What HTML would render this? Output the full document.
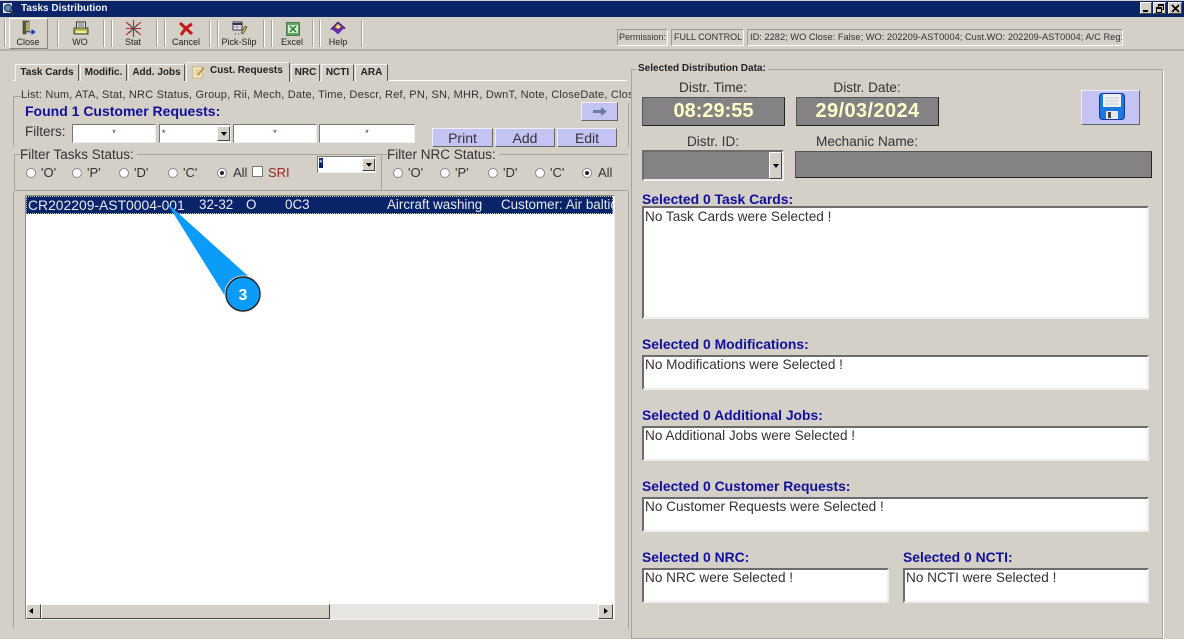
<!DOCTYPE html>
<html><head><meta charset="utf-8"><style>
html,body{margin:0;padding:0}
body{width:1184px;height:629px;position:relative;overflow:hidden;background:#d4d0c8;font-family:"Liberation Sans",sans-serif;color:#333}
div,span.a,svg.a{position:absolute;box-sizing:border-box}
.t{white-space:nowrap;line-height:14px}
.sep{top:20px;width:2px;height:27px;border-left:1px solid #a5a29c;border-right:1px solid #fff}
.tb{top:36px;font-size:9px;width:50px;text-align:center;color:#222;line-height:12px}
.tab{top:64px;height:17px;background:#d4d0c8;border:1px solid #f4f3f0;border-right:1px solid #555;border-bottom:0;font-size:10px;font-weight:bold;color:#222;text-align:center;line-height:15px;white-space:nowrap}
.inp{background:#fff;border:1px solid;border-color:#777 #eee #eee #777;color:#2a1a80;font-size:9px;text-align:center;line-height:16px}
.btn{background:#c4c4f4;border:1px solid;border-color:#eeeefc #666 #666 #eeeefc;font-size:14px;text-align:center;color:#333;line-height:18px}
.grp{border:1px solid #a8a59f;box-shadow:1px 1px 0 #fff}
.rd{width:10px;height:10px;border-radius:50%;background:#fff;border:1px solid #888;top:168px}
.rd.on::after{content:"";position:absolute;left:2px;top:2px;width:4px;height:4px;border-radius:50%;background:#222}
.lb{top:166px;font-size:13px;color:#333;white-space:nowrap;line-height:14px}
.h{font-size:13.9px;font-weight:bold;color:#10109c;white-space:nowrap;line-height:15px}
.box{background:#fff;border:2px solid;border-color:#6c6c6c #eeeeee #eeeeee #6c6c6c;font-size:13.6px;color:#333;padding-left:1px;line-height:15px;white-space:nowrap}
.gray{background:#848284;border:1px solid;border-color:#555 #222 #222 #555;color:#ffffc8;font-size:20px;font-weight:bold;text-align:center;line-height:26px}
.cap{font-size:13.6px;color:#333;text-align:center;white-space:nowrap;line-height:15px}
</style></head><body>

<!-- title bar -->
<div style="left:0;top:0;width:1184px;height:1px;background:#d4d0c8"></div>
<div style="left:0;top:1px;width:1184px;height:16px;background:#0a246a"></div>
<svg class="a" style="left:2px;top:2px" width="14" height="14" viewBox="0 0 14 14"><rect x="1" y="1" width="9" height="10" fill="#d8e4ee"/><circle cx="6" cy="6" r="3.5" fill="#5a8fc0" stroke="#222"/><path d="M8 9l4 4" stroke="#333" stroke-width="2"/></svg>
<div class="t" style="left:21px;top:2px;font-size:10px;font-weight:bold;color:#f2f2f2">Tasks Distribution</div>
<div style="left:1140px;top:2px;width:12px;height:12px;background:#d4d0c8;border:1px solid;border-color:#fff #444 #444 #fff"><div style="left:2px;top:7px;width:5px;height:2px;background:#000"></div></div>
<div style="left:1153px;top:2px;width:13px;height:12px;background:#d4d0c8;border:1px solid;border-color:#fff #444 #444 #fff"><div style="left:4px;top:1px;width:6px;height:6px;border:1px solid #000;border-top-width:2px"></div><div style="left:2px;top:4px;width:6px;height:6px;border:1px solid #000;border-top-width:2px;background:#d4d0c8"></div></div>
<div style="left:1168px;top:2px;width:14px;height:12px;background:#d4d0c8;border:1px solid;border-color:#fff #444 #444 #fff"><svg class="a" style="left:2px;top:1px" width="9" height="9"><path d="M1 1l7 7M8 1l-7 7" stroke="#000" stroke-width="1.7"/></svg></div>

<!-- toolbar -->
<div style="left:0;top:49px;width:1184px;height:2px;background:#b4b1aa"></div>
<div style="left:9px;top:18px;width:39px;height:31px;border:1px solid;border-color:#fff #8a8780 #8a8780 #fff"></div>
<div class="sep" style="left:4px"></div>
<div class="sep" style="left:57px"></div>
<div class="sep" style="left:103px"></div>
<div class="sep" style="left:111px"></div>
<div class="sep" style="left:156px"></div>
<div class="sep" style="left:164px"></div>
<div class="sep" style="left:209px"></div>
<div class="sep" style="left:217px"></div>
<div class="sep" style="left:263px"></div>
<div class="sep" style="left:271px"></div>
<div class="sep" style="left:312px"></div>
<div class="sep" style="left:319px"></div>
<div class="sep" style="left:361px"></div>

<svg class="a" style="left:20px;top:20px" width="16" height="16" viewBox="0 0 16 16"><path d="M3 1h6v11H6v2H3z" fill="#5c5c3c" stroke="#333" stroke-width=".6"/><rect x="6" y="2" width="3" height="9" fill="#a8a878"/><path d="M9 12l3 0M12 10v4l3-2z" stroke="#1a3aa8" fill="#1a3aa8" stroke-width="1"/></svg>
<svg class="a" style="left:73px;top:21px" width="16" height="15" viewBox="0 0 16 15"><rect x="3.5" y="1" width="9" height="6" fill="#eee" stroke="#333"/><path d="M5 3h6M5 5h6" stroke="#333" stroke-width=".8"/><rect x="1" y="7" width="14" height="6" fill="#b8b84c" stroke="#444"/><rect x="3" y="10" width="10" height="2" fill="#f4f0a0"/></svg>
<svg class="a" style="left:125px;top:20px" width="17" height="17" viewBox="0 0 17 17"><path d="M1 2l15 13M16 2L1 15M8.5 0v17M1 8.500h15" stroke="#b02828" stroke-width="1.100"/><path d="M4 4l9 9M13 4l-9 9" stroke="#555" stroke-width="1"/></svg>
<svg class="a" style="left:178px;top:22px" width="16" height="14" viewBox="0 0 16 14"><path d="M2 1l12 11M14 2c-4 2-8 6-11 11" stroke="#c81818" stroke-width="3" fill="none"/></svg>
<svg class="a" style="left:232px;top:21px" width="16" height="16" viewBox="0 0 16 16"><rect x="1" y="1" width="9" height="8" fill="#e8e8f8" stroke="#334"/><path d="M1 3h9" stroke="#334" stroke-width="2"/><path d="M5 4v5M1 6h9" stroke="#889" stroke-width=".7"/><path d="M9 12l4-7 2 1-4 7z" fill="#c8b830" stroke="#333" stroke-width=".6"/><path d="M3 13h1M6 13h1" stroke="#333"/></svg>
<svg class="a" style="left:286px;top:22px" width="14" height="14" viewBox="0 0 14 14"><rect x=".5" y=".5" width="13" height="13" fill="#5fa860" stroke="#4a7a4a"/><rect x="2" y="3" width="10" height="8" fill="#d4ecd4"/><path d="M4 4l6 6M10 4l-6 6" stroke="#2a7a34" stroke-width="1.500"/></svg>
<svg class="a" style="left:330px;top:21px" width="16" height="15" viewBox="0 0 16 15"><path d="M8 1l7 6-7 7-7-6z" fill="#6a2ca0" stroke="#301050" stroke-width=".7"/><path d="M5 6l3-3 3 3-3 2z" fill="#f0e060"/><path d="M2 9l6 5 6-6" stroke="#d8d0f0" fill="none"/></svg>

<div class="tb" style="left:3px">Close</div>
<div class="tb" style="left:55px">WO</div>
<div class="tb" style="left:108px">Stat</div>
<div class="tb" style="left:161px">Cancel</div>
<div class="tb" style="left:214px">Pick-Slip</div>
<div class="tb" style="left:267px">Excel</div>
<div class="tb" style="left:313px">Help</div>

<div class="t" style="left:617px;top:29px;width:51px;height:17px;border:1px solid;border-color:#999 #fff #fff #999;font-size:9px;line-height:15px;padding-left:1px;color:#333">Permission:</div>
<div class="t" style="left:671px;top:29px;width:73px;height:17px;border:1px solid;border-color:#999 #fff #fff #999;font-size:9px;line-height:15px;padding-left:2px;color:#333">FULL CONTROL</div>
<div class="t" style="left:747px;top:29px;width:376px;height:17px;border:1px solid;border-color:#999 #fff #fff #999;font-size:9.3px;line-height:15px;padding-left:2px;color:#333;overflow:hidden">ID: 2282; WO Close: False; WO: 202209-AST0004; Cust.WO: 202209-AST0004; A/C Reg:</div>

<!-- tabs -->
<div style="left:13px;top:80px;width:614px;height:1px;background:#fff"></div>
<div style="left:13px;top:191px;width:1px;height:438px;background:#a8a59f"></div>
<div style="left:628px;top:191px;width:1px;height:438px;background:#a8a59f"></div>
<div class="tab" style="left:15px;width:64px">Task Cards</div>
<div class="tab" style="left:80px;width:47px">Modific.</div>
<div class="tab" style="left:128px;width:57px">Add. Jobs</div>
<div class="tab" style="left:186px;width:104px;top:62px;height:20px;text-align:left;padding-left:23px;line-height:16px;z-index:2">Cust. Requests
<svg class="a" style="left:5px;top:2px" width="13" height="14" viewBox="0 0 13 14"><rect x="1" y="2" width="9" height="11" fill="#f6efc8" stroke="#c8b880"/><path d="M3 5h5M3 7h4M3 9h3" stroke="#b0a070" stroke-width=".8"/><path d="M5 10l6-8 1.500 1-6 8z" fill="#c89030"/></svg></div>
<div class="tab" style="left:291px;width:29px">NRC</div>
<div class="tab" style="left:321px;width:33px">NCTI</div>
<div class="tab" style="left:355px;width:33px">ARA</div>

<!-- list group -->
<div style="left:13px;top:96px;width:1px;height:51px;background:#a8a59f"></div>
<div style="left:13px;top:96px;width:8px;height:1px;background:#a8a59f"></div>
<div style="left:628px;top:103px;width:1px;height:44px;background:#a8a59f"></div>
<div class="t" style="left:21px;top:88px;width:610px;overflow:hidden;font-size:11px;letter-spacing:.2px;color:#333">List: Num, ATA, Stat, NRC Status, Group, Rii, Mech, Date, Time, Descr, Ref, PN, SN, MHR, DwnT, Note, CloseDate, CloseTime</div>
<div class="t" style="left:25px;top:103px;font-size:14px;font-weight:bold;color:#10109c;line-height:16px">Found 1 Customer Requests:</div>
<div class="t" style="left:25px;top:125px;font-size:13.5px">Filters:</div>
<div class="inp" style="left:72px;top:124px;width:84px;height:19px">*</div>
<div class="inp" style="left:159px;top:124px;width:72px;height:19px;text-align:left;padding-left:2px">*
<div style="left:57px;top:1px;width:13px;height:15px;background:#d4d0c8;border:1px solid;border-color:#fff #444 #444 #fff"><div style="left:3px;top:5px;width:0;height:0;border:3px solid transparent;border-top:4px solid #000"></div></div></div>
<div class="inp" style="left:233px;top:124px;width:84px;height:19px">*</div>
<div class="inp" style="left:319px;top:124px;width:96px;height:19px">*</div>
<div class="btn" style="left:581px;top:102px;width:37px;height:19px"><svg class="a" style="left:11px;top:4px" width="15" height="9"><path d="M0 3h8V0l6 4.500-6 4.500V6H0z" fill="#6c7c9c"/></svg></div>
<div class="btn" style="left:432px;top:128px;width:61px;height:19px">Print</div>
<div class="btn" style="left:495px;top:128px;width:60px;height:19px">Add</div>
<div class="btn" style="left:557px;top:128px;width:60px;height:19px">Edit</div>

<!-- filter status -->
<div class="grp" style="left:14px;top:154px;width:367px;height:37px;border-right:0;box-shadow:none"></div>
<div style="left:381px;top:154px;width:247px;height:37px;border-top:1px solid #a8a59f;border-left:1px solid #a8a59f;border-bottom:1px solid #a8a59f"></div>
<div class="t" style="left:20px;top:148px;font-size:13.5px;background:#d4d0c8;padding-right:3px">Filter Tasks Status:</div>
<div class="t" style="left:387px;top:148px;font-size:13.5px;background:#d4d0c8;padding-right:3px">Filter NRC Status:</div>

<div class="rd" style="left:26px"></div><div class="lb" style="left:41px">'O'</div>
<div class="rd" style="left:72px"></div><div class="lb" style="left:87px">'P'</div>
<div class="rd" style="left:119px"></div><div class="lb" style="left:134px">'D'</div>
<div class="rd" style="left:168px"></div><div class="lb" style="left:183px">'C'</div>
<div class="rd on" style="left:217px"></div><div class="lb" style="left:233px">All</div>
<div style="left:252px;top:166px;width:11px;height:11px;background:#fff;border:1px solid #777"></div>
<div class="lb" style="left:268px;color:#a02828">SRI</div>

<div class="inp" style="left:317px;top:156px;width:59px;height:17px;text-align:left;padding-left:1px;line-height:13px"><span style="background:#0a246a;color:#fff">*</span>
<div style="left:44px;top:1px;width:13px;height:13px;background:#d4d0c8;border:1px solid;border-color:#fff #444 #444 #fff"><div style="left:3px;top:4px;width:0;height:0;border:3px solid transparent;border-top:4px solid #000"></div></div></div>

<div class="rd" style="left:393px"></div><div class="lb" style="left:408px">'O'</div>
<div class="rd" style="left:440px"></div><div class="lb" style="left:455px">'P'</div>
<div class="rd" style="left:488px"></div><div class="lb" style="left:503px">'D'</div>
<div class="rd" style="left:535px"></div><div class="lb" style="left:550px">'C'</div>
<div class="rd on" style="left:582px"></div><div class="lb" style="left:598px">All</div>

<!-- list -->
<div style="left:25px;top:195px;width:590px;height:425px;background:#fff;border:1px solid;border-color:#8a8780 #eee #eee #8a8780"></div>
<div class="t" style="left:26px;top:196px;width:587px;height:18px;background:#0a246a;color:#e8e8f0;font-size:13.4px;line-height:18px;outline:1px dotted #c8c8c8;outline-offset:-1px;overflow:hidden"><span class="a" style="left:2px;font-size:13.9px">CR202209-AST0004-001</span><span class="a" style="left:173px">32-32</span><span class="a" style="left:220px">O</span><span class="a" style="left:259px">0C3</span><span class="a" style="left:361px">Aircraft washing</span><span class="a" style="left:475px">Customer: Air baltic</span></div>

<!-- scrollbar -->
<div style="left:26px;top:604px;width:587px;height:15px;background:#e8e6e2"></div>
<div style="left:26px;top:604px;width:15px;height:15px;background:#d4d0c8;border:1px solid;border-color:#fff #444 #444 #fff"><div style="left:2px;top:3px;width:0;height:0;border:3px solid transparent;border-right:4px solid #000;border-left:0"></div></div>
<div style="left:41px;top:604px;width:289px;height:15px;background:#d4d0c8;border:1px solid;border-color:#fff #444 #444 #fff"></div>
<div style="left:598px;top:604px;width:15px;height:15px;background:#d4d0c8;border:1px solid;border-color:#fff #444 #444 #fff"><div style="left:5px;top:3px;width:0;height:0;border:3px solid transparent;border-left:4px solid #000;border-right:0"></div></div>

<!-- callout -->
<svg class="a" style="left:160px;top:200px" width="110" height="120" viewBox="0 0 110 120"><path d="M7 3L88 76 65 96z" fill="#0a9cf8"/><circle cx="83" cy="94" r="18" fill="#0a9cf8" stroke="#f0f0f0" stroke-width="1"/><circle cx="83" cy="94" r="17" fill="none" stroke="#222" stroke-width="1.400"/><text x="83" y="100" text-anchor="middle" font-family="Liberation Sans" font-weight="bold" font-size="16" fill="#fff">3</text></svg>

<!-- right group -->
<div class="grp" style="left:631px;top:69px;width:532px;height:570px"></div>
<div class="t" style="left:636px;top:62px;font-size:10px;font-weight:bold;color:#222;background:#d4d0c8;padding:0 2px">Selected Distribution Data:</div>

<div class="cap" style="left:642px;top:80px;width:142px">Distr. Time:</div>
<div class="cap" style="left:796px;top:80px;width:142px">Distr. Date:</div>
<div class="gray" style="left:642px;top:97px;width:143px;height:29px">08:29:55</div>
<div class="gray" style="left:796px;top:97px;width:143px;height:29px;letter-spacing:.4px">29/03/2024</div>
<div class="btn" style="left:1081px;top:90px;width:59px;height:35px"><svg class="a" style="left:17px;top:2px" width="26" height="27" viewBox="0 0 26 27"><rect x="0.500" y="0.500" width="25" height="26" rx="3" fill="#1a78e0" stroke="#123a90"/><rect x="4" y="1" width="18" height="13" fill="#f0f0f0"/><path d="M6 5h14M6 8h14M6 11h14" stroke="#c0c8d8"/><rect x="7" y="18" width="12" height="8" fill="#e8e8e8"/><rect x="9" y="19" width="3" height="6" fill="#444"/></svg></div>

<div class="cap" style="left:642px;top:134px;width:142px">Distr. ID:</div>
<div class="cap" style="left:796px;top:134px;width:142px">Mechanic Name:</div>
<div style="left:642px;top:150px;width:142px;height:31px;background:#848284;border:2px solid;border-color:#6c6c6c #eee #eee #6c6c6c">
<div style="left:125px;top:0;width:13px;height:27px;background:#d4d0c8;border:1px solid;border-color:#fff #444 #444 #fff"><div style="left:3px;top:11px;width:0;height:0;border:3px solid transparent;border-top:4px solid #000"></div></div></div>
<div style="left:795px;top:151px;width:357px;height:27px;background:#848284;border:1px solid;border-color:#555 #222 #222 #555"></div>

<div class="h" style="left:642px;top:192px">Selected 0 Task Cards:</div>
<div class="box" style="left:642px;top:206px;width:507px;height:113px;padding-top:1px">No Task Cards were Selected !</div>
<div class="h" style="left:642px;top:337px">Selected 0 Modifications:</div>
<div class="box" style="left:642px;top:355px;width:507px;height:35px">No Modifications were Selected !</div>
<div class="h" style="left:642px;top:408px">Selected 0 Additional Jobs:</div>
<div class="box" style="left:642px;top:426px;width:507px;height:35px">No Additional Jobs were Selected !</div>
<div class="h" style="left:642px;top:479px">Selected 0 Customer Requests:</div>
<div class="box" style="left:642px;top:497px;width:507px;height:35px">No Customer Requests were Selected !</div>
<div class="h" style="left:642px;top:550px">Selected 0 NRC:</div>
<div class="box" style="left:642px;top:568px;width:247px;height:35px">No NRC were Selected !</div>
<div class="h" style="left:903px;top:550px">Selected 0 NCTI:</div>
<div class="box" style="left:903px;top:568px;width:246px;height:35px">No NCTI were Selected !</div>

</body></html>
